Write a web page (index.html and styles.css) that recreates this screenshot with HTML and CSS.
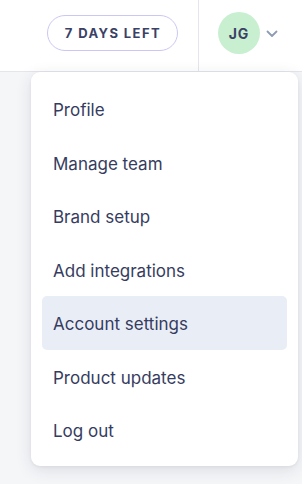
FILE: index.html
```html
<!DOCTYPE html>
<html lang="en">
<head>
    <meta charset="UTF-8">
    <meta name="viewport" content="width=device-width, initial-scale=1.0">
    <title>Account menu</title>
    <link rel="stylesheet" href="styles.css">
</head>
<body>
    <div class="topbar">
        <div class="trial">
            <span class="trial-badge">7 days left</span>
        </div>
        <div class="user">
            <div class="avatar">JG</div>
            <svg class="chevron" width="12" height="8" viewBox="0 0 12 8">
                <path d="M1.5 1.5 L6 6 L10.5 1.5" fill="none" stroke="#8d9db2" stroke-width="1.8" stroke-linecap="round" stroke-linejoin="round"/>
            </svg>
        </div>
    </div>
    <div class="page">
        <div class="menu">
            <div class="menu-item">Profile</div>
            <div class="menu-item">Manage team</div>
            <div class="menu-item">Brand setup</div>
            <div class="menu-item">Add integrations</div>
            <div class="menu-item active">Account settings</div>
            <div class="menu-item">Product updates</div>
            <div class="menu-item">Log out</div>
        </div>
    </div>
</body>
</html>
```

FILE: styles.css
```css
:root {
    --text-color: #363c60;
    --border-color: #e4e6eb;
    --page-bg: #f5f6f8;
    --active-bg: #e9eef6;
}
body {
    font-family: 'Inter', 'Liberation Sans', sans-serif;
    margin: 0;
    padding: 0;
    background-color: var(--page-bg);
    color: var(--text-color);
    width: 302px;
    height: 484px;
    overflow: hidden;
}
.topbar {
    display: flex;
    height: 72px;
    background-color: white;
    border-bottom: 1px solid var(--border-color);
    box-sizing: border-box;
}
.trial {
    width: 199px;
    display: flex;
    align-items: center;
    justify-content: flex-end;
    padding-right: 20px;
    padding-bottom: 5px;
    box-sizing: border-box;
    border-right: 1px solid var(--border-color);
}
.trial-badge {
    display: inline-block;
    height: 36px;
    line-height: 35px;
    box-sizing: border-box;
    padding: 0 16px 0 17px;
    border: 1px solid #cbc7f4;
    border-radius: 18px;
    font-size: 13px;
    font-weight: 700;
    letter-spacing: 1.4px;
    text-transform: uppercase;
    color: #3b4166;
}
.user {
    flex-grow: 1;
    display: flex;
    align-items: center;
    padding-left: 19px;
    padding-bottom: 5px;
}
.avatar {
    width: 42px;
    height: 42px;
    border-radius: 50%;
    background-color: #c9efd1;
    display: flex;
    align-items: center;
    justify-content: center;
    font-size: 14px;
    font-weight: 700;
    letter-spacing: 1px;
    color: #3b4166;
}
.chevron {
    margin-left: 6px;
    margin-top: 1px;
}
.page {
    position: relative;
}
.menu {
    position: absolute;
    top: 0;
    left: 31px;
    width: 267px;
    padding: 10px 11px 9px;
    box-sizing: border-box;
    background-color: white;
    border-radius: 9px;
    box-shadow: 0 4px 16px rgba(30, 40, 70, 0.12), 0 1px 3px rgba(30, 40, 70, 0.06);
}
.menu-item {
    height: 53.5px;
    display: flex;
    align-items: center;
    padding-left: 11px;
    padding-top: 3px;
    box-sizing: border-box;
    border-radius: 5px;
    font-size: 17px;
    color: var(--text-color);
}
.menu-item.active {
    background-color: var(--active-bg);
}
```
